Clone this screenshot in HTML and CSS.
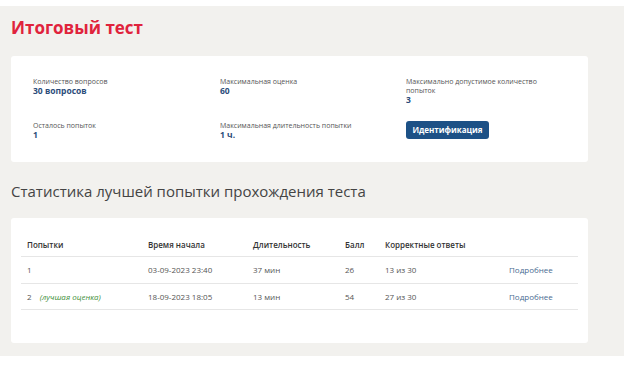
FILE: index.html
```html
<!DOCTYPE html>
<html lang="ru">
<head>
  <meta charset="UTF-8">
  <title>Итоговый тест</title>
  <link rel="stylesheet" href="styles.css">
</head>
<body>

<div class="page">

  <!--заголовок-->
  <h1 class="title">Итоговый тест</h1>

  <!--информация о тесте-->
  <div class="card info">
    <div class="item">
      <div class="label">Количество вопросов</div>
      <div class="value">30 вопросов</div>
    </div>
    <div class="item">
      <div class="label">Максимальная оценка</div>
      <div class="value">60</div>
    </div>
    <div class="item">
      <div class="label">Максимально допустимое количество попыток</div>
      <div class="value">3</div>
    </div>
    <div class="item">
      <div class="label">Осталось попыток</div>
      <div class="value">1</div>
    </div>
    <div class="item">
      <div class="label">Максимальная длительность попытки</div>
      <div class="value">1 ч.</div>
    </div>
    <div class="item">
      <a class="btn" href="javascript:;">Идентификация</a>
    </div>
  </div>

  <h2 class="subtitle">Статистика лучшей попытки прохождения теста</h2>

  <!--таблица попыток-->
  <div class="card stats">
    <table>
      <thead>
        <tr>
          <th class="c1">Попытки</th>
          <th class="c2">Время начала</th>
          <th class="c3">Длительность</th>
          <th class="c4">Балл</th>
          <th class="c5">Корректные ответы</th>
          <th></th>
        </tr>
      </thead>
      <tbody>
        <tr>
          <td>1</td>
          <td>03-09-2023 23:40</td>
          <td>37 мин</td>
          <td>26</td>
          <td>13 из 30</td>
          <td><a href="#">Подробнее</a></td>
        </tr>
        <tr>
          <td>2 <span class="best">(лучшая оценка)</span></td>
          <td>18-09-2023 18:05</td>
          <td>13 мин</td>
          <td>54</td>
          <td>27 из 30</td>
          <td><a href="#">Подробнее</a></td>
        </tr>
      </tbody>
    </table>
  </div>

</div>

</body>
</html>
```

FILE: styles.css
```css
* {
  margin: 0;
  padding: 0;
  box-sizing: border-box;
}

body {
  background-color: #fff;
  font-family: "Open Sans", "Noto Sans", sans-serif;
  color: #555;
}

/*серый фон страницы*/
.page {
  width: 624px;
  height: 350px;
  margin-top: 6px;
  padding: 9px 36px 0 11px;
  background-color: #f2f1ee;
}

.title {
  font-size: 17px;
  line-height: 26px;
  font-weight: 700;
  color: #e0233c;
}

.card {
  background-color: #fff;
  border-radius: 3px;
}

/*блок с информацией*/
.info {
  margin-top: 15px;
  height: 106px;
  padding: 21px 22px 0;
  display: grid;
  grid-template-columns: 187px 186px 1fr;
  row-gap: 16px;
  align-items: start;
  align-content: start;
}

.info .label {
  font-size: 7px;
  line-height: 9px;
  color: #555;
  max-width: 150px;
}

.info .value {
  font-size: 8.5px;
  line-height: 10px;
  font-weight: 700;
  color: #2c4c7a;
}

.btn {
  display: block;
  width: 83px;
  height: 18px;
  line-height: 18px;
  text-align: center;
  background-color: #1d5186;
  border-radius: 3px;
  color: #fff;
  font-size: 8px;
  font-weight: 700;
  text-decoration: none;
}

.subtitle {
  margin-top: 19px;
  font-size: 15px;
  line-height: 20px;
  font-weight: 400;
  color: #444;
}

/*таблица*/
.stats {
  margin-top: 17px;
  height: 125px;
  padding: 16px 10px 0;
}

.stats table {
  width: 100%;
  border-collapse: collapse;
  font-size: 8px;
}

.stats th,
.stats td {
  text-align: left;
  padding: 0 0 0 6px;
  border-bottom: 1px solid #e6e6e6;
}

.stats th {
  height: 22px;
  font-weight: 600;
  color: #333;
}

.stats td {
  height: 27px;
  color: #555;
}

.stats tbody tr:last-child td {
  height: 26px;
}

.c1 { width: 121px; }
.c2 { width: 105px; }
.c3 { width: 92px; }
.c4 { width: 40px; }
.c5 { width: 124px; }

.best {
  margin-left: 6px;
  font-style: italic;
  color: #3f8f3a;
}

.stats a {
  color: #4a6b92;
  text-decoration: none;
}
```
